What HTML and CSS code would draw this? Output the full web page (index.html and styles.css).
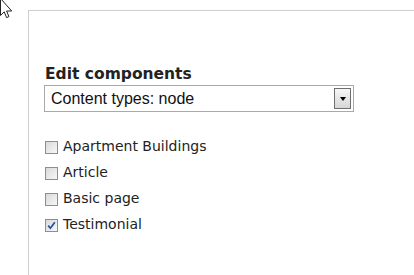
FILE: index.html
```html
<!DOCTYPE html>
<html lang="en">
<head>
<meta charset="utf-8">
<title>Edit components</title>
<link rel="stylesheet" href="styles.css">
</head>
<body>
<svg class="cursor" width="13" height="20" viewBox="0 0 13 20" aria-hidden="true">
  <path d="M0.5 -1.5 L0.5 15.5 L4.2 11.8 L6.6 17.6 L8.9 16.6 L6.6 11 L11.7 11 Z" fill="#fff" stroke="#222" stroke-width="1" stroke-linejoin="miter"/>
</svg>
<div class="panel">
  <div class="field">
    <label class="field-label" for="ctype">Edit components</label>
    <div class="select" id="ctype">
      <span class="select-text">Content types: node</span>
      <span class="select-btn"><span class="arrow"></span></span>
    </div>
  </div>
  <ul class="options">
    <li class="option"><span class="box"></span><span class="opt-label">Apartment Buildings</span></li>
    <li class="option"><span class="box"></span><span class="opt-label">Article</span></li>
    <li class="option"><span class="box"></span><span class="opt-label">Basic page</span></li>
    <li class="option"><span class="box checked"><svg width="9" height="9" viewBox="0 0 9 9"><path d="M1.2 4.6 L3.4 7.2 L7.8 1.2" fill="none" stroke="#1f4fa8" stroke-width="1.7"/></svg></span><span class="opt-label">Testimonial</span></li>
  </ul>
</div>
</body>
</html>
```

FILE: styles.css
```css
html, body {
  margin: 0;
  padding: 0;
  background: #fff;
  overflow: hidden;
}

body {
  font-family: "DejaVu Sans", Verdana, sans-serif;
  color: #222;
}

.cursor {
  position: absolute;
  left: 0;
  top: 0;
}

.panel {
  box-sizing: border-box;
  margin: 10px 0 0 28px;
  border-top: 1px solid #cfcfcf;
  border-left: 1px solid #cfcfcf;
  padding: 54px 0 0 15px;
  height: 265px;
}

.field-label {
  display: block;
  font-weight: bold;
  font-size: 15.5px;
  line-height: 18px;
  padding-left: 1px;
  margin-bottom: 2px;
  color: #222;
}

.select {
  box-sizing: border-box;
  width: 310px;
  height: 27px;
  border: 1px solid #a9a9a9;
  display: flex;
  align-items: center;
  justify-content: space-between;
  padding: 0 2px 0 6px;
}

.select-text {
  font-family: "Liberation Sans", Arial, sans-serif;
  font-size: 16px;
  color: #111;
}

.select-btn {
  box-sizing: border-box;
  width: 17px;
  height: 21px;
  border: 1px solid #6f6f6f;
  background: linear-gradient(#f7f7f7, #d6d6d6);
  display: flex;
  align-items: center;
  justify-content: center;
}

.arrow {
  width: 0;
  height: 0;
  border-left: 3.5px solid transparent;
  border-right: 3.5px solid transparent;
  border-top: 4px solid #000;
  margin-top: 1px;
}

.options {
  list-style: none;
  margin: 21px 0 0 0;
  padding: 0;
}

.option {
  display: flex;
  align-items: center;
  height: 26px;
}

.box {
  box-sizing: border-box;
  width: 13px;
  height: 13px;
  border: 1px solid #8e8e8e;
  background: linear-gradient(135deg, #d9d9d9, #f7f7f7);
  margin: 2px 5px 0 1px;
  display: flex;
  align-items: center;
  justify-content: center;
}

.opt-label {
  font-size: 14px;
  line-height: 18px;
  color: #222;
}
```
